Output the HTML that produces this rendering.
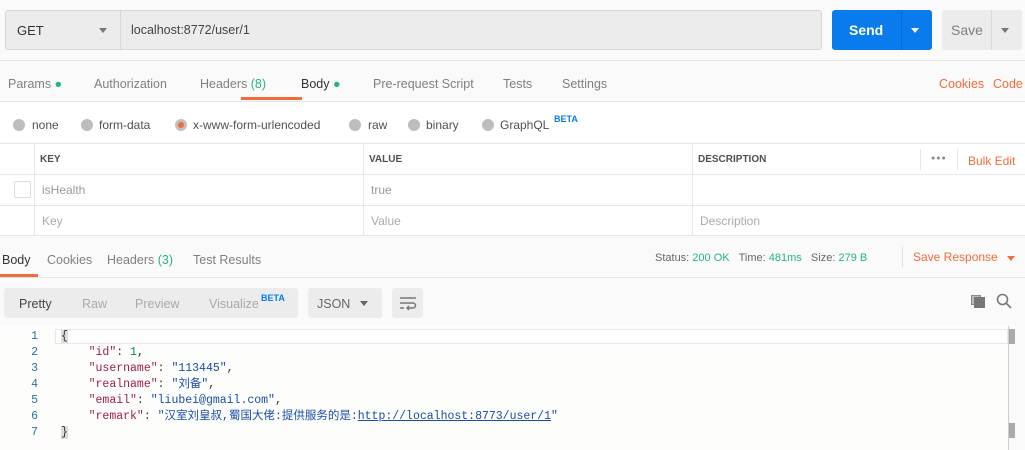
<!DOCTYPE html>
<html><head><meta charset="utf-8"><style>
*{box-sizing:border-box;margin:0;padding:0}
body{width:1025px;height:450px;overflow:hidden;background:#fafafa;font-family:"Liberation Sans","Noto Sans CJK SC",sans-serif;font-size:12px;color:#505050;position:relative}
.a{position:absolute}
.g{color:#26b47f}.o{color:#f26b3a}.l{color:#808080}
.hr{position:absolute;left:0;width:1025px;height:1px;background:#e6e6e6}
.rad{position:absolute;top:119px;width:12px;height:12px;border-radius:50%;background:#bdbdbd}
.th{font-size:10px;font-weight:bold;color:#505050}
.code{font-family:"Liberation Mono","Noto Sans CJK SC",monospace;font-size:11.5px}
.k{color:#a01c4c}.s{color:#1a4ca8}
sup{position:relative;top:-3px}
</style></head><body>
<div class="a" style="left:5px;top:10px;width:817px;height:40px;background:#ececec;border:1px solid #d7d7d7;border-radius:3px"></div>
<div class="a" style="left:120px;top:10px;width:1px;height:40px;background:#d7d7d7"></div>
<div class="a" style="left:17px;top:23px;font-size:13px;color:#333">GET</div>
<div class="a" style="left:99px;top:28px;border:4px solid transparent;border-top:5px solid #777"></div>
<div class="a" style="left:131px;top:23px;font-size:12.5px;color:#444">localhost:8772/user/1</div>
<div class="a" style="left:832px;top:10px;width:100px;height:40px;background:#097bed;border-radius:3px"></div>
<div class="a" style="left:901px;top:10px;width:1px;height:40px;background:#0a69cc"></div>
<div class="a" style="left:849px;top:22px;font-size:14px;font-weight:bold;color:#fff">Send</div>
<div class="a" style="left:911px;top:28px;border:4px solid transparent;border-top:5px solid #fff"></div>
<div class="a" style="left:942px;top:10px;width:80px;height:40px;background:#ececec;border-radius:3px"></div>
<div class="a" style="left:991px;top:10px;width:1px;height:40px;background:#d7d7d7"></div>
<div class="a" style="left:951px;top:22px;font-size:14px;color:#808080">Save</div>
<div class="a" style="left:1001px;top:28px;border:4px solid transparent;border-top:5px solid #777"></div>
<div class="hr" style="top:60px"></div>
<div class="a l" style="top:77px;left:8px;font-size:12.5px">Params <span class="g">●</span></div>
<div class="a l" style="top:77px;left:94px;font-size:12.5px">Authorization</div>
<div class="a l" style="top:77px;left:200px;font-size:12.5px">Headers <span class="g">(8)</span></div>
<div class="a" style="top:77px;left:301px;font-size:12.5px;color:#333">Body <span class="g">●</span></div>
<div class="a l" style="top:77px;left:373px;font-size:12.5px">Pre-request Script</div>
<div class="a l" style="top:77px;left:503px;font-size:12.5px">Tests</div>
<div class="a l" style="top:77px;left:562px;font-size:12.5px">Settings</div>
<div class="a o" style="top:77px;left:939px;font-size:12.5px">Cookies</div>
<div class="a o" style="top:77px;left:993px;font-size:12.5px">Code</div>
<div class="a" style="left:241px;top:97px;width:61px;height:3px;background:#f26b3a"></div>
<div class="hr" style="top:101px"></div>
<div class="a" style="left:0;top:102px;width:1025px;height:41px;background:#fff"></div>
<div class="rad" style="left:13px"></div><div class="a" style="left:32px;top:118px">none</div>
<div class="rad" style="left:81px"></div><div class="a" style="left:99px;top:118px">form-data</div>
<div class="rad" style="left:175px;background:#c0c0c0"><div style="margin:3px;width:6px;height:6px;border-radius:50%;background:#f26b3a"></div></div><div class="a" style="left:193px;top:118px">x-www-form-urlencoded</div>
<div class="rad" style="left:349px"></div><div class="a" style="left:368px;top:118px">raw</div>
<div class="rad" style="left:408px"></div><div class="a" style="left:426px;top:118px">binary</div>
<div class="rad" style="left:482px"></div><div class="a" style="left:500px;top:118px">GraphQL</div><div class="a" style="left:554px;top:114px;color:#097bed;font-size:9px;font-weight:bold">BETA</div>
<div class="a" style="left:0;top:143px;width:1025px;height:93px;background:#fff;border-top:1px solid #e6e6e6;border-bottom:1px solid #e6e6e6"></div>
<div class="hr" style="top:174px"></div><div class="hr" style="top:205px"></div>
<div class="a" style="left:34px;top:143px;width:1px;height:93px;background:#e6e6e6"></div>
<div class="a" style="left:363px;top:143px;width:1px;height:93px;background:#e6e6e6"></div>
<div class="a" style="left:692px;top:143px;width:1px;height:93px;background:#e6e6e6"></div>
<div class="a" style="left:920px;top:149px;width:1px;height:21px;background:#e6e6e6"></div>
<div class="a" style="left:957px;top:149px;width:1px;height:21px;background:#e6e6e6"></div>
<div class="a th" style="left:40px;top:154px">KEY</div>
<div class="a th" style="left:369px;top:154px">VALUE</div>
<div class="a th" style="left:698px;top:154px">DESCRIPTION</div>
<div class="a" style="left:931px;top:155px;color:#888;font-size:7px;letter-spacing:1px">●●●</div>
<div class="a o" style="left:968px;top:154px">Bulk Edit</div>
<div class="a" style="left:14px;top:181px;width:17px;height:17px;border:1px solid #ddd;border-radius:2px"></div>
<div class="a" style="left:42px;top:183px;color:#999">isHealth</div>
<div class="a" style="left:371px;top:183px;color:#999">true</div>
<div class="a" style="left:42px;top:214px;color:#aaa">Key</div>
<div class="a" style="left:371px;top:214px;color:#aaa">Value</div>
<div class="a" style="left:700px;top:214px;color:#aaa">Description</div>
<div class="a" style="left:2px;top:253px;color:#333;font-size:12.5px">Body</div>
<div class="a l" style="left:47px;top:253px;font-size:12.5px">Cookies</div>
<div class="a l" style="left:107px;top:253px;font-size:12.5px">Headers <span class="g">(3)</span></div>
<div class="a l" style="left:193px;top:253px;font-size:12.5px">Test Results</div>
<div class="a" style="left:0;top:274px;width:38px;height:3px;background:#f26b3a"></div>
<div class="a" style="left:655px;top:252px;font-size:11px;color:#666">Status: <span class="g">200 OK</span>&nbsp;&nbsp; Time: <span class="g">481ms</span>&nbsp;&nbsp; Size: <span class="g">279 B</span></div>
<div class="a" style="left:902px;top:247px;width:1px;height:20px;background:#e0e0e0"></div>
<div class="a o" style="left:913px;top:250px;font-size:12px">Save Response</div>
<div class="a" style="left:1007px;top:256px;border:4px solid transparent;border-top:5px solid #f26b3a"></div>
<div class="hr" style="top:277px"></div>
<div class="a" style="left:4px;top:288px;width:294px;height:30px;background:#ececec;border-radius:3px"></div>
<div class="a" style="left:19px;top:297px;color:#444;font-size:12.5px">Pretty</div>
<div class="a" style="left:82px;top:297px;color:#aaa;font-size:12.5px">Raw</div>
<div class="a" style="left:135px;top:297px;color:#aaa;font-size:12.5px">Preview</div>
<div class="a" style="left:209px;top:297px;color:#aaa;font-size:12.5px">Visualize</div><div class="a" style="left:261px;top:293px;color:#097bed;font-size:9px;font-weight:bold">BETA</div>
<div class="a" style="left:308px;top:288px;width:74px;height:30px;background:#ececec;border-radius:3px"></div>
<div class="a" style="left:317px;top:297px;color:#666;font-size:12.5px">JSON</div>
<div class="a" style="left:360px;top:301px;border:4px solid transparent;border-top:5px solid #666"></div>
<div class="a" style="left:392px;top:288px;width:31px;height:30px;background:#ececec;border-radius:3px"></div>
<svg class="a" style="left:399px;top:295px" width="18" height="16" viewBox="0 0 18 16" fill="none" stroke="#777" stroke-width="1.5"><path d="M1 3h16M1 8h13a2.5 2.5 0 010 5H8M10 11l-2 2 2 2M1 13h4"/></svg>
<div class="a" style="left:971px;top:295px;width:10px;height:10px;border:1px solid #888;background:#bbb"></div>
<div class="a" style="left:974px;top:297px;width:11px;height:11px;background:#777"></div>
<svg class="a" style="left:996px;top:293px" width="16" height="16" fill="none" stroke="#777" stroke-width="1.6"><circle cx="6.5" cy="6.5" r="5"/><path d="M10 10l5 5"/></svg>
<div class="a" style="left:0;top:326px;width:1008px;height:124px;background:#fdfdfb"></div>
<div class="a" style="left:55px;top:329px;width:953px;height:15px;border:1px solid #e8e8e8;background:#fff"></div>
<div class="a" style="left:1008px;top:326px;width:1px;height:124px;background:#ccc"></div>
<div class="a" style="left:1009px;top:329px;width:6px;height:15px;background:#aaa"></div>
<div class="a" style="left:1009px;top:423px;width:6px;height:15px;background:#aaa"></div>
<div class="a code" style="left:0;top:329px;width:38px;text-align:right;color:#237893;line-height:16px">1<br>2<br>3<br>4<br>5<br>6<br>7</div>
<div class="a code" style="left:61px;top:329px;line-height:16px;white-space:pre;color:#333"><span style="background:#ddd">{</span>
    <span class="k">"id"</span>: <span style="color:#098658">1</span>,
    <span class="k">"username"</span>: <span class="s">"113445"</span>,
    <span class="k">"realname"</span>: <span class="s">"刘备"</span>,
    <span class="k">"email"</span>: <span class="s">"liubei@gmail.com"</span>,
    <span class="k">"remark"</span>: <span class="s">"汉室刘皇叔,蜀国大佬:提供服务的是:<u>http://localhost:8773/user/1</u>"</span>
<span style="background:#ddd">}</span></div>
</body></html>
